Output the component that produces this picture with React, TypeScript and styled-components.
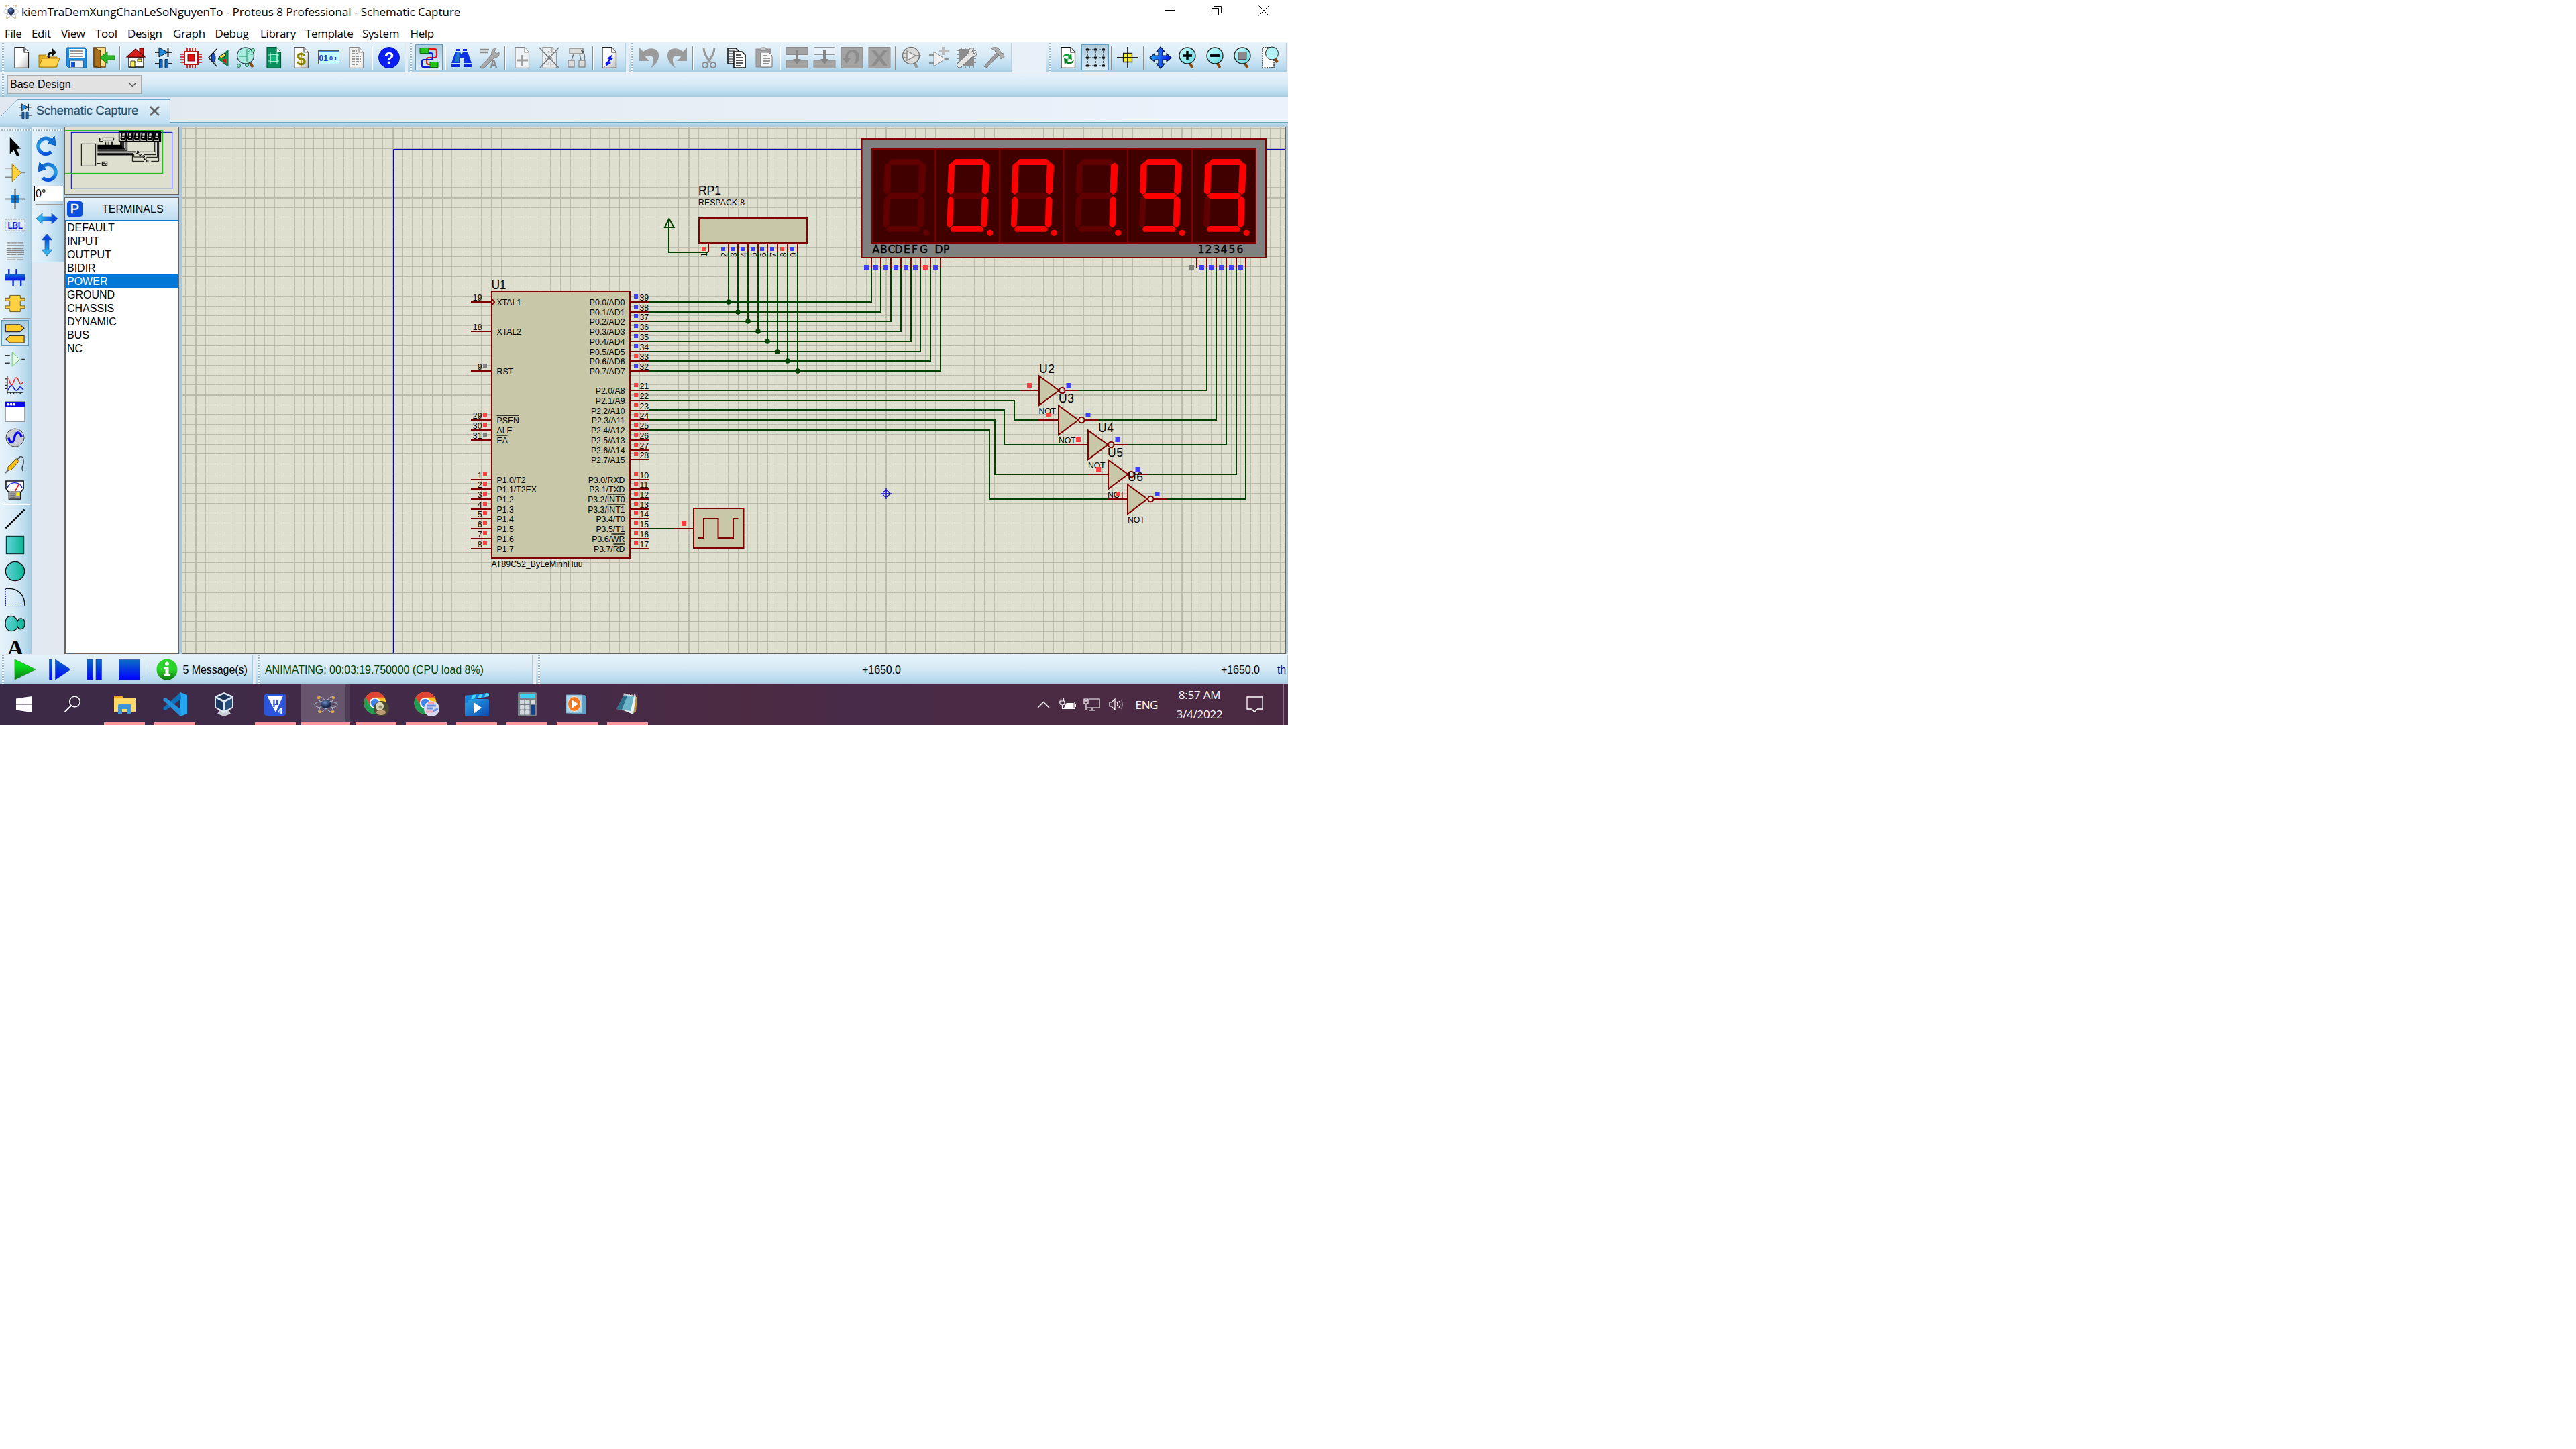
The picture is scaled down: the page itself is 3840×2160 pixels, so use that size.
import React from "react";
import styled, { createGlobalStyle, css } from "styled-components";

const Global = createGlobalStyle`
  html, body { margin: 0; padding: 0; background: #fff; }
  * { box-sizing: border-box; }
  svg { display: block; flex: none; }
`;

const ui = `"Open Sans", "Noto Sans", sans-serif`;
const sans = `"Liberation Sans", Arial, sans-serif`;
const barGradient = "#e6f2fa 0%, #d9ebf6 42%, #bfdef1 75%, #b5d7eb 88%, #a8c9dc 100%";

/* ---------- icons ---------- */

const page = (fill = "#fff", stroke = "#222") => (
  <>
    <path d="M6 .7h14l6.5 7.3v23.3H6z" fill={fill} stroke={stroke} strokeWidth="1.2" />
    <path d="M20 .7v7.3h6.5" fill="#fff" stroke={stroke} strokeWidth="1.2" />
  </>
);
const lens = (
  <>
    <path d="M18 23l4.5 8" stroke="#8a4a10" strokeWidth="4" />
    <ellipse cx="15" cy="13" rx="12" ry="12" fill="url(#lens)" stroke="#222" strokeWidth="1.3" />
  </>
);

const icons: Record<string, React.ReactNode> = {
  new: page("url(#paper)"),
  open: (
    <>
      <path d="M1 30V12h10l3 3h14v15z" fill="#e8b020" stroke="#a87808" />
      <path d="M1 30l5-13h26l-5 13z" fill="#ffd44c" stroke="#a87808" />
      <path d="M14 16c-1-7 2-9 7-9V2l6 6-6 6v-4c-4 0-5 2-4 6z" fill="#111" />
    </>
  ),
  save: (
    <>
      <path d="M2 1h26l3 3v27H4l-3-3V2z" fill="#1d8fe0" stroke="#1260a8" />
      <path d="M5 3h23v13H5z" fill="#fff" />
      <path d="M7 6h19M7 10h19M7 14h19" stroke="#333" strokeWidth="1.2" />
      <path d="M6 20h20v11H6z" fill="#e8eef4" stroke="#345" />
      <path d="M8 22h6v8H8z" fill="#1c55c4" />
    </>
  ),
  exit: (
    <>
      <path d="M1 1h17v29H1z" fill="#ffe08a" stroke="#6a4308" strokeWidth="1.5" />
      <path d="M1 1l10 5v25L1 29z" fill="#a8701c" stroke="#50320a" />
      <path d="M32 13H21V7L10 16l11 9v-6h11z" fill="#2fb52a" stroke="#1d8a1a" />
    </>
  ),
  home: (
    <>
      <path d="M21 2h6v10h-6z" fill="#d81818" stroke="#400" />
      <path d="M5 15h22v15H5z" fill="#fff" stroke="#111" strokeWidth="1.3" />
      <path d="M2 15L15 3l14 12z" fill="#dd1c1c" stroke="#500" strokeWidth="1.2" />
      <path d="M8 21h6v9H8zM18 18h6v4h-6z" fill="#fff04a" stroke="#222" />
    </>
  ),
  parts: (
    <>
      <path d="M3 8h26" stroke="#222" strokeWidth="1.8" />
      <path d="M9 1l13 7-13 7z" fill="#1f8be0" stroke="#111" />
      <path d="M22.5 1v14" stroke="#111" strokeWidth="2" />
      <path d="M3 25h8M21 25h8" stroke="#222" strokeWidth="1.8" />
      <path d="M9.500 18.500h4.500v13H9.500zM18 18.500h4.500v13H18z" fill="#1769b8" stroke="#0b2f58" />
    </>
  ),
  chip: (
    <>
      <path d="M10 1v30M14 1v30M18 1v30M22 1v30M0 11h32M0 15h32M0 19h32M0 23h32" stroke="#cf1010" strokeWidth="1.7" />
      <rect x="6" y="7" width="20" height="19" fill="#fff" stroke="#c01010" strokeWidth="2" />
      <rect x="11" y="11" width="10" height="10" fill="#e11414" stroke="#800" />
    </>
  ),
  eye3d: (
    <>
      <path d="M30 4v25L15 18z" fill="#129a52" stroke="#064" />
      <path d="M17 14l9-5v5l-7 3z" fill="#f5ec40" stroke="#111" />
      <path d="M20 19l7-1v7z" fill="#e01010" />
      <path d="M13 3L1 16l12 13" fill="none" stroke="#222" strokeWidth="1.6" />
      <ellipse cx="8" cy="16" rx="3" ry="7" fill="#1c50c8" stroke="#111" />
    </>
  ),
  board: (
    <>
      <path d="M20 22l6 8" stroke="#8a4a10" strokeWidth="4" />
      <ellipse cx="15" cy="13" rx="12.500" ry="12" fill="#a9ecdf" stroke="#345" strokeWidth="1.3" />
      <path d="M6 14h11V3M17 14v8M22 5c-6 3-5 6 4 6" stroke="#169060" fill="none" />
      <circle cx="5" cy="28" r="2.500" fill="#8fe0c8" stroke="#107048" />
      <circle cx="26" cy="5" r="2.500" fill="#8fe0c8" stroke="#107048" />
      <circle cx="17" cy="27" r="2.500" fill="#8fe0c8" stroke="#107048" />
    </>
  ),
  gerber: (
    <>
      {page("#0a8f60", "#065a3c")}
      <path d="M11 8v4h-3M21 8v4h3M11 25v-4h-3M21 25v-4h3" stroke="#b9f4da" fill="none" />
      <rect x="11" y="11" width="10" height="11" fill="#12b57c" stroke="#c4f6e0" strokeWidth="1.6" />
    </>
  ),
  bill: (
    <>
      {page("url(#paper)", "#555")}
      <text x="16" y="27" textAnchor="middle" fontFamily={sans} fontWeight="700" fontSize="25" fill="#8a8400">$</text>
    </>
  ),
  bits: (
    <>
      <rect x="0.500" y="5.500" width="31" height="20" fill="#c3fbff" stroke="#555" />
      <path d="M1 6h30v2H1z" fill="#3d7fd0" />
      <text x="1.500" y="20.500" fontFamily={sans} fontWeight="700" fontSize="12" fill="#0a36d8">01</text>
      <text x="17" y="20" fontFamily={sans} fontWeight="700" fontSize="9" fill="#0a36d8">0</text>
      <text x="24" y="19.500" fontFamily={sans} fontWeight="700" fontSize="8" fill="#0a36d8">1</text>
    </>
  ),
  report: (
    <>
      {page("#f2f2f0", "#888")}
      <path d="M9 6h8M9 10h9M9 14h14M9 18h14M9 22h14M9 26h10" stroke="#777" strokeWidth="1.400" strokeDasharray="5 1" />
    </>
  ),
  help: (
    <>
      <circle cx="16" cy="16" r="15.500" fill="#0a1df2" stroke="#0012b0" />
      <text x="16" y="24.500" textAnchor="middle" fontFamily={sans} fontWeight="700" fontSize="24" fill="#fff">?</text>
    </>
  ),
  wire: (
    <>
      <path d="M16 3h8q3 0 3 3v7q0 3-3 3h-9q-3 0-3 3v4q0 3 3 3h3" fill="none" stroke="#e81414" strokeWidth="2.200" />
      <path d="M15 9h3q3 0 3 3v4q0 3-3 3H8q-3 0-3 3v6q0 2 2 2h11" fill="none" stroke="#1018e0" strokeWidth="2.200" />
      <path d="M2 1.500h13v8H2zM17 22.500h12v8H17z" fill="#24c41e" stroke="#0b6a0a" />
    </>
  ),
  find: (
    <>
      <path d="M8 3h6v3H8zM18 3h6v3h-6z" fill="#0a28e0" />
      <path d="M7 7h7l1 3h2l1-3h7l6 17H19v-8h-6v8H1z" fill="#0d33e6" />
      <path d="M1 26h12v4H1zM19 26h12v4H19z" fill="#0a28e0" />
      <path d="M9 8h4l-1 15H5z" fill="#1d78c8" />
    </>
  ),
  props: (
    <>
      <path d="M2 4h14M2 8h12" stroke="#8c8c8c" strokeWidth="2.600" />
      <path d="M4 29L20 11c-1-6 2-9 7-9l-3 5 3 3 4-2c1 6-3 8-7 8L9 31c-3 2-7 1-5-2z" fill="#a8a8a8" stroke="#888" />
      <text x="17" y="31" fontFamily={sans} fontWeight="700" fontSize="16" fill="#8a8a8a">A</text>
    </>
  ),
  sheetAdd: (
    <>
      {page("#eef4f8", "#888")}
      <path d="M16 12v17M8 20h17" stroke="#a0a0a0" strokeWidth="3" />
    </>
  ),
  sheetDel: (
    <>
      {page("#e8eef2", "#999")}
      <path d="M13 8h7l-3-4zM10 18h12l-6-6zM11 26h4v-4M18 22v8M22 26h-4" fill="none" stroke="#aaa" />
      <path d="M1 1l29 30M30 1L2 31" stroke="#777" strokeWidth="1.600" />
    </>
  ),
  tree: (
    <>
      <path d="M5 2h20v8H5zM3 20h9v10H3zM19 20h9v10h-9z" fill="#dcdcdc" stroke="#8a8a8a" strokeWidth="1.300" />
      <path d="M11 10L8 20M20 10l2 10M23 7c5 2 5 8 4 13" stroke="#777" strokeWidth="1.500" fill="none" />
      <path d="M22 5l5 1-3 4z" fill="#555" />
    </>
  ),
  erc: (
    <>
      {page("url(#paper)")}
      <path d="M21 11l-8 6 3 2-6 6 2 1-3 4 10-6-3-2 6-5-3-1z" fill="#0a14f0" />
    </>
  ),
  undo: <path d="M1 1l6 6c9-8 24-6 23 7-.500 8-6 13-12 18 5-9 7-19-3-19-3 0-4 1-5 2l6 6H1z" fill="#9b9b9b" />,
  redo: <path d="M31 1l-6 6C16-1 1 1 2 14c.500 8 6 13 12 18-5-9-7-19 3-19 3 0 4 1 5 2l-6 6h15z" fill="#9b9b9b" />,
  cut: (
    <>
      <path d="M8 1c0 8 4 14 10 22M24 1c0 8-4 14-10 22" stroke="#999" strokeWidth="3" fill="none" />
      <ellipse cx="10" cy="27" rx="4" ry="4" fill="none" stroke="#8c8c8c" strokeWidth="2.200" />
      <ellipse cx="22" cy="27" rx="4" ry="4" fill="none" stroke="#8c8c8c" strokeWidth="2.200" />
    </>
  ),
  copy: (
    <>
      <path d="M3 2h12l4 4v19H3z" fill="#e8eef2" stroke="#111" strokeWidth="1.600" />
      <path d="M5 6h8M5 10h6M5 14h6M5 18h6M5 22h6" stroke="#222" />
      <path d="M12 7h12l5 5v19H12z" fill="#fff" stroke="#111" strokeWidth="1.600" />
      <path d="M15 12h7M15 16h11M15 20h11M15 24h11M15 28h8" stroke="#222" strokeWidth="1.300" />
    </>
  ),
  paste: (
    <>
      <path d="M4 3h22v27H4z" fill="#a2a2a2" stroke="#8a8a8a" />
      <path d="M10 5l2-4h6l2 4z" fill="#c8c8c8" stroke="#888" />
      <path d="M11 8h12l5 5v17H11z" fill="#f6f6f6" stroke="#777" />
      <path d="M14 13h7M14 17h11M14 21h11M14 25h9" stroke="#777" strokeWidth="1.300" />
    </>
  ),
  blockCopy: (
    <>
      <path d="M0 .500h32v11H0zM0 20h32v11.500H0z" fill="#a4a4a4" stroke="#8c8c8c" />
      <path d="M14 5h4v13h4l-6 8-6-8h4z" fill="#858585" />
    </>
  ),
  blockMove: (
    <>
      <path d="M.500 .500h31v11H.500z" fill="#e9f2f8" stroke="#999" />
      <path d="M0 20h32v11.500H0z" fill="#a4a4a4" stroke="#8c8c8c" />
      <path d="M14 5h4v13h4l-6 8-6-8h4z" fill="#858585" />
    </>
  ),
  blockRotate: (
    <>
      <path d="M0 .500h32v31H0z" fill="#a4a4a4" stroke="#8c8c8c" />
      <path d="M2 17h4C6 0 27 0 27 15c0 6-4 10-8 11 4-6 5-18-3-18-5 0-6 4-6 9h4l-6 8z" fill="#8c8c8c" />
    </>
  ),
  blockDelete: (
    <>
      <path d="M0 .500h32v31H0z" fill="#a4a4a4" stroke="#8c8c8c" />
      <path d="M4 5h6l6 8 6-8h6L19 16l9 12h-6l-6-8-6 8H4l9-12z" fill="#8c8c8c" />
    </>
  ),
  pick: (
    <>
      <path d="M20 23l4 8" stroke="#999" strokeWidth="4" />
      <ellipse cx="15" cy="13" rx="12.500" ry="12.500" fill="#dcdcdc" stroke="#777" strokeWidth="1.500" />
      <path d="M9 6l13 7-13 7zM5 10h4M5 16h4M22 13h8" fill="#eee" stroke="#888" strokeWidth="1.400" />
    </>
  ),
  make: (
    <>
      <path d="M22 0v12M16 6h14" stroke="#bdbdbd" strokeWidth="4" />
      <path d="M8 7l17 11L8 29z" fill="#f0f0f0" stroke="#888" />
      <path d="M1 12h7M1 24h7M24 18h6" stroke="#777" strokeWidth="1.600" />
    </>
  ),
  pack: (
    <>
      <path d="M2 5h28M2 11h28M2 17h28M2 23h28M8 1v30M14 1v30M20 1v30M26 1v30" stroke="#777" strokeWidth="1.300" />
      <path d="M4 3h23v25H4z" fill="#8e8e8e" />
      <path d="M2 25L18 10c0-6 3-9 8-8l-2 5 3 3 4-3c1 6-3 8-7 8L9 29c-5 5-9-1-7-4z" fill="#e4e4e4" stroke="#777" />
    </>
  ),
  hammer: (
    <>
      <path d="M19 9L1 29l4 2L23 12z" fill="#9c9c9c" stroke="#777" />
      <path d="M11 2c8-3 13-1 15 7l4 1 1 5-5 3-3-6-5-4-1-3z" fill="#b0b0b0" stroke="#777" />
    </>
  ),
  refresh: (
    <>
      {page("#fff", "#111")}
      <path d="M8 16c1-6 7-8 11-4l2-3 1 10-8-2 3-2c-3-3-6-2-9 1z" fill="#159a38" />
      <path d="M25 19c-1 6-7 9-12 5l-2 3-1-10 8 2-3 2c3 3 6 2 10-2z" fill="#0f7a2c" />
    </>
  ),
  grid: (
    <>
      <path d="M1 4h31M1 16h31M1 28h31M4 1v30M16 1v30M28 1v30" stroke="#222" strokeWidth="1.200" strokeDasharray="3 2" />
      <path d="M2 4h4M14 4h4M26 4h4M2 16h4M14 16h4M26 16h4M2 28h4M14 28h4M26 28h4" stroke="#111" strokeWidth="3" />
    </>
  ),
  origin: (
    <>
      <path d="M9.500 9.500h13v13h-13z" fill="#fff022" stroke="#222" strokeWidth="1.300" />
      <path d="M0 16h32M16 0v32" stroke="#222" strokeWidth="1.800" />
    </>
  ),
  pan: (
    <path d="M16 0l6 7h-3v6h6v-3l7 6-7 6v-3h-6v6h3l-6 7-6-7h3v-6H7v3l-7-6 7-6v3h6V7h-3z" fill="url(#blueMove)" stroke="#0a1440" strokeWidth="1.200" />
  ),
  zoomIn: (
    <>
      {lens}
      <path d="M8 13h14M15 6v14" stroke="#000" strokeWidth="3.400" />
    </>
  ),
  zoomOut: (
    <>
      {lens}
      <path d="M8 13h14" stroke="#000" strokeWidth="3.800" />
    </>
  ),
  zoomAll: (
    <>
      {lens}
      <path d="M9 7.500h12v11H9z" fill="#8a8a8a" stroke="#555" />
    </>
  ),
  zoomArea: (
    <>
      <path d="M4 1h17v30H4z" fill="#fff" stroke="#222" strokeWidth="1.300" strokeDasharray="2 1.500" />
      <path d="M22 16l4 7" stroke="#8a4a10" strokeWidth="4" />
      <circle cx="18" cy="9.500" r="9.500" fill="#b4f3f8" stroke="#222" />
    </>
  ),
  arrow: <path d="M8 1l17 18-7 .500 5 10-4 2-5-10-6 6z" fill="#000" />,
  component: (
    <>
      <path d="M1 9h11M1 23h11M24 16h8" stroke="#888" strokeWidth="1.600" />
      <path d="M11.500 2l14 14-14 14z" fill="#ffd23c" stroke="#8a7018" />
    </>
  ),
  junction: (
    <>
      <rect x="9.500" y="9.500" width="13" height="13" fill="#1280e0" />
      <path d="M1 16h30M16 1v30" stroke="#222" strokeWidth="1.800" />
    </>
  ),
  label: (
    <>
      <rect x="0.700" y="7" width="30.600" height="18" fill="#dceaf3" stroke="#777" strokeDasharray="3 1" />
      <text x="16" y="22" textAnchor="middle" fontFamily={ui} fontWeight="600" fontSize="15" textLength="24" fill="#1a1ac8">LBL</text>
    </>
  ),
  script: (
    <path d="M3 3h6M10 3h9M20 3h9M3 7h27M3 12h7M11 12h18M3 15h27M3 18h27M3 21h6M10 21h8M20 21h10M3 26h26M3 29h14M19 29h10" stroke="#8a8a8a" strokeWidth="1.300" />
  ),
  bus: (
    <>
      <path d="M6.500 3v10M18 3v10M13 20v9M25 20v9" stroke="#0a2ae0" strokeWidth="2.400" />
      <path d="M1 11h30v10H1z" fill="url(#blueBar)" />
    </>
  ),
  sub: (
    <path d="M8 3.500h16v4h7v4h-7v8h7v4h-7v5H8v-5H1v-4h7v-8H1v-4h7z" fill="#ffd040" stroke="#6a5818" />
  ),
  terminal: (
    <>
      <path d="M1.500 3h22l6.500 5.500-6.500 5.500h-22z" fill="#ffca2c" stroke="#333" strokeWidth="1.200" />
      <path d="M30 20H8l-6.500 5.500L8 31h22z" fill="#ffca2c" stroke="#333" strokeWidth="1.200" />
    </>
  ),
  pin: (
    <>
      <path d="M1 10h7M1 22h7M26 16h6" stroke="#333" strokeWidth="1.600" />
      <path d="M11.500 5l12 11-12 11z" fill="#e8f8ec" stroke="#58cc68" />
    </>
  ),
  graph: (
    <>
      <path d="M4 2v25h25M1 6h3M1 11h3M1 16h3M1 21h3M9 27v3M14 27v3M19 27v3M24 27v3M4 27v3" fill="none" stroke="#222" strokeWidth="1.400" />
      <path d="M6 4c3 14 5 14 8 6s5-8 8 0 4 3 7 0" fill="none" stroke="#f01818" strokeWidth="1.500" />
      <path d="M5 24c3-8 6-10 9-4s6 4 8 0 5 1 7 3" fill="none" stroke="#1010e0" strokeWidth="1.500" />
    </>
  ),
  popup: (
    <>
      <rect x="1" y="1" width="30" height="30" fill="#fff" stroke="#777" strokeWidth="1.400" />
      <path d="M.500 1h31v7.500H.500z" fill="#0a0af2" />
      <circle cx="5" cy="4.800" r="2" fill="#fff" /><circle cx="9.800" cy="4.800" r="2" fill="#fff" /><circle cx="14.600" cy="4.800" r="2" fill="#fff" />
    </>
  ),
  sine: (
    <>
      <circle cx="16" cy="16" r="14" fill="#c8ccd0" stroke="#444" />
      <path d="M6 16c2 9 7 10 9 0s8-10 11-1" fill="none" stroke="#0a0af2" strokeWidth="3.600" />
    </>
  ),
  probe: (
    <>
      <path d="M1 30l7-7" stroke="#777" strokeWidth="2.200" />
      <path d="M5 21L18 8l4 4L10 25l-5 1z" fill="#ffc420" stroke="#6a4a08" />
      <path d="M20 9c3-6 9-6 9 3 1 7-5 8-1 15" fill="none" stroke="#333" strokeWidth="1.300" />
    </>
  ),
  meter: (
    <>
      <path d="M2 2h27v12l-4 5H6l-4-5z" fill="#fff" stroke="#111" strokeWidth="1.600" />
      <path d="M4 13C7 2 24 2 27 13" fill="none" stroke="#1022e8" strokeWidth="1.500" />
      <path d="M16 18l6-11" stroke="#f01818" strokeWidth="1.800" />
      <path d="M6.500 19h18v11h-18z" fill="#9a9a9a" stroke="#111" strokeWidth="1.400" />
      <path d="M18 20h5v5h-5z" fill="#fff020" />
      <path d="M9 22h7M9 25h7M9 28h7" stroke="#222" />
    </>
  ),
  line: <path d="M1.500 30.500L30.500 1.500" stroke="#000" strokeWidth="2.400" />,
  box: <rect x="2.500" y="2.500" width="27" height="27" fill="url(#teal)" stroke="#123f3c" strokeWidth="1.300" />,
  circle: <circle cx="16" cy="16" r="14.600" fill="url(#teal)" stroke="#111" strokeWidth="1.300" />,
  arc: (
    <>
      <path d="M1.500 2.500C20 1 31 11 31 29.500" fill="none" stroke="#111" strokeWidth="1.400" />
      <path d="M1.500 3v26.500H31" fill="none" stroke="#1010e0" strokeDasharray="2 1.500" />
    </>
  ),
  path: (
    <path d="M20 12c3-6 11-5 11 4s-8 11-11 5C17 30 1 31 1 16S16 2 20 12z" fill="url(#teal)" stroke="#111" strokeWidth="1.300" />
  ),
  text: <text x="16" y="25.500" textAnchor="middle" fontFamily="'Liberation Serif', serif" fontWeight="700" fontSize="36">A</text>,
  cw: (
    <>
      <path d="M24 9.500A11.500 11.500 0 1 0 22.500 24" fill="none" stroke="url(#blueTurn)" strokeWidth="5.400" />
      <path d="M17 11L27 1l2.500 14z" fill="#0f72d4" stroke="#0a58b0" />
    </>
  ),
  ccw: (
    <>
      <path d="M8 9.500A11.500 11.500 0 1 1 9.500 24" fill="none" stroke="url(#blueTurn)" strokeWidth="5.400" />
      <path d="M15 11L5 1 2.500 15z" fill="#0f62d4" stroke="#0a58b0" />
    </>
  ),
  flipX: <path d="M0 16l9-8v5h14V8l9 8-9 8v-5H9v5z" fill="url(#flipx)" stroke="#1c5fa8" strokeWidth=".7" />,
  flipY: <path d="M16 0l8 9h-5v14h5l-8 9-8-9h5V9H8z" fill="url(#flipy)" stroke="#1c5fa8" strokeWidth=".7" />,
  play: <path d="M1 1l31 15L1 31z" fill="url(#green)" stroke="#2a6a2a" strokeWidth=".6" />,
  step: <path d="M.5 1h4v30h-4zM9.500 1L32 16 9.500 31z" fill="url(#bluePlay)" stroke="#203a8a" strokeWidth=".6" />,
  pause: <path d="M5 1h8.500v30H5zM18 1h8.500v30H18z" fill="url(#bluePlay)" stroke="#203a8a" strokeWidth=".6" />,
  stop: <path d="M.5 1.500h31v29.500H.5z" fill="url(#bluePlay)" stroke="#203a8a" strokeWidth=".6" />,
  info: (
    <>
      <circle cx="16" cy="16" r="15.500" fill="url(#info)" />
      <circle cx="16" cy="7.500" r="2.900" fill="#fff" />
      <path d="M11 12.500h7.500V23H21v2.500H11V23h2.500v-8H11z" fill="#fff" />
    </>
  ),
};

const Icon = ({ name, size = 32 }: { name: string; size?: number }) => (
  <svg width={size} height={size} viewBox="0 0 32 32" overflow="visible">{icons[name]}</svg>
);

/* ---------- window chrome ---------- */

const Window = styled.div`
  width: 1920px; height: 1080px; overflow: hidden;
  display: flex; flex-direction: column;
  background: linear-gradient(90deg, #e1e8f0, #eaf3fb);
  font-family: ${sans}; font-size: 16px; color: #000;
`;
const TitleBar = styled.div`
  height: 36px; padding: 0 0 1px 5px; background: #fff;
  display: flex; align-items: center; font-family: ${ui};
`;
const Title = styled.span`
  flex: 1; padding-left: 4px; font-size: 17px; letter-spacing: -0.03px; white-space: nowrap; line-height: 34px;
`;
const Controls = styled.div`display: flex; gap: 54px; padding-right: 28px; margin-top: -3px;`;
const MenuBar = styled.div`
  height: 26px; padding: 1px 0 0 7px; background: #fff; display: flex; font-family: ${ui};
`;
const MenuItem = styled.span<{ $w: number }>`
  width: ${(p) => p.$w}px; font-size: 17px; line-height: 25px; letter-spacing: -0.38px; white-space: nowrap;
`;
const ToolRow = styled.div`
  height: 46px; padding-top: 1px; display: flex; border-top: 1px solid #f0f0f0;
`;
const ToolGroup = styled.div<{ $w: number; $gap: number }>`
  width: ${(p) => p.$w}px; margin-right: ${(p) => p.$gap}px; height: 44px; padding-left: 3px;
  display: flex; align-items: center;
  border-right: 1px solid #b3cfe2;
  background: linear-gradient(${barGradient});
`;
const Grip = styled.span<{ $pad?: number }>`
  align-self: stretch; width: 3px; margin-right: ${(p) => p.$pad ?? 5}px; flex: none;
  background: repeating-linear-gradient(#9db3c3 0 2px, #f5fafd 2px 4px);
`;
const ToolButton = styled.span<{ $on?: boolean }>`
  width: 41px; height: 39px; flex: none; margin-top: -1px;
  display: flex; align-items: center; justify-content: center;
  ${(p) => p.$on && css`border: 1px solid #5f9cc0; background: linear-gradient(#a9cade, #d9edf9);`}
`;
const VRule = styled.span`
  width: 2px; height: 35px; margin: 0 3px 0 2.500px; flex: none; background: #8f8f8f; border-right: 1px solid #fff;
`;
const DesignRow = styled.div`
  height: 36px; border-top: 2px solid #e9eff5; padding-left: 3px;
  display: flex; align-items: center;
  background: linear-gradient(${barGradient});
`;
const Combo = styled.div`
  width: 200px; height: 28px; margin-top: -2px; padding: 0 6px 0 3px; background: #e2e2e2; border: 1px solid #acacac;
  display: flex; align-items: center; justify-content: space-between;
`;
const TabRow = styled.div`
  height: 39px; display: flex; align-items: flex-end; border-bottom: 1px solid #6fa0c0;
`;
const Tab = styled.div`
  position: relative; width: 254px; height: 35px; margin-bottom: -1px; padding-left: 26px;
  display: flex; align-items: center; color: #27506f; font-size: 18px;
  -webkit-text-stroke: 0.35px #27506f;
`;
const TabShape = styled.svg`position: absolute; left: 0; top: 0; z-index: 0;`;
const TabLabel = styled.span`position: relative; margin: 0 17px 0 5px; letter-spacing: -0.05px; white-space: nowrap;`;
const TabIcon = styled.span`position: relative;`;
const Band = styled.div`height: 6px; background: linear-gradient(#c0dff2, #a9cbe0);`;

const Main = styled.div`height: 786px; display: flex;`;
const SideBar = styled.div<{ $w: number; $h: number }>`
  width: ${(p) => p.$w}px; height: ${(p) => p.$h}px; overflow: hidden; padding: 3px 0 0 2px;
  display: flex; flex-direction: column; align-items: flex-start;
  background: linear-gradient(90deg, ${barGradient});
  border-bottom: ${(p) => (p.$h < 700 ? "1px solid #a9cbe0" : "none")};
`;
const HGrip = styled.span`
  height: 3px; width: 44px; margin-bottom: 3.500px; flex: none;
  background: repeating-linear-gradient(90deg, #9db3c3 0 2px, #f5fafd 2px 4px);
`;
const HRule = styled.span<{ $m: string }>`
  width: 41px; height: 2px; margin: ${(p) => p.$m}; flex: none; background: #9b9b9b; border-bottom: 1px solid #fff;
`;
const SideButton = styled(ToolButton)`margin-top: 0;`;
const Angle = styled.div`
  width: 43px; height: 23px; margin: 0 0 3px 2px; padding-left: 1px; line-height: 22px; flex: none; background: #fff;
  border-top: 1px solid #000; border-left: 1px solid #000;
`;
const Selector = styled.div`
  width: 171px; height: 786px; display: flex; flex-direction: column; gap: 4px; background: #b5d3e6;
`;
const Overview = styled.div`height: 101px; border: 1px solid #666; background: #dfdfcf; overflow: hidden;`;
const Panel = styled.div`flex: 1; border: 1px solid #666; display: flex; flex-direction: column;`;
const PanelHead = styled.div`
  height: 33px; padding-left: 3px; display: flex; align-items: center; background: linear-gradient(#e6f2fa, #bddcf0);
`;
const PBadge = styled.span`
  width: 23px; height: 23px; margin-right: 29px; border-radius: 4px; background: #0a50dc; color: #fff;
  font-size: 20px; line-height: 23px; text-align: center; -webkit-text-stroke: 0.5px #fff;
`;
const List = styled.div`flex: 1; background: #fff; border: 1px solid #0f78c8;`;
const Row = styled.div<{ $on: boolean }>`
  height: 20px; padding-left: 2px; line-height: 21px;
  ${(p) => p.$on && css`background: #0078d7; color: #fff;`}
`;
const CanvasFrame = styled.div`
  width: 1653px; height: 786px; padding-left: 4px; background: #a9c8dc;
`;
const Canvas = styled.div`width: 1646px; height: 786px; border: 1px solid #666; background: #dfdfcf;`;

const StatusBar = styled.div`height: 45px; padding-top: 1px; display: flex;`;
const StatusGroup = styled.div<{ $w: number; $gap?: number }>`
  width: ${(p) => p.$w}px; margin-right: ${(p) => p.$gap ?? 0}px; height: 44px; padding-left: 3px; flex: none;
  display: flex; align-items: center; overflow: hidden; white-space: nowrap;
  background: linear-gradient(${barGradient}); border-right: 1px solid #a9cbe0;
`;
const Play = styled.span<{ $ml: number }>`margin-left: ${(p) => p.$ml}px;`;
const Msg = styled.span<{ $ml: number; $c?: string }>`
  margin-left: ${(p) => p.$ml}px; padding-top: 2px; color: ${(p) => p.$c ?? "#000"}; letter-spacing: -0.05px;
`;

/* ---------- taskbar ---------- */

const TaskBar = styled.div`
  height: 60px; display: flex; padding-left: 0;
  background: linear-gradient(90deg, #3b2a47 0%, #402a48 20%, #452b48 45%, #4b2a42 58%, #472b48 66%, #4b2b43 85%, #4a2a42 100%);
  color: #fff; font-family: ${ui};
`;
const Slot = styled.span<{ $w: number; $run?: boolean; $active?: boolean }>`
  position: relative; width: ${(p) => p.$w}px; flex: none; display: flex; align-items: center; justify-content: center;
  ${(p) => p.$active && css`background: linear-gradient(90deg, transparent 1px, #67556d 1px 67px, #4f3c55 67px 74px, transparent 74px);`}
  ${(p) => p.$run && css`
    &::after {
      content: ""; position: absolute; bottom: 0; height: 3px; background: #ff979d;
      left: ${p.$active ? 1 : 7}px; width: ${p.$active ? 73 : 61}px;
    }`}
`;
const Tray = styled.div`margin-left: auto; display: flex; align-items: center; font-size: 17px;`;
const TrayItem = styled.span<{ $mr: number }>`margin-right: ${(p) => p.$mr}px; letter-spacing: -0.4px;`;
const Clock = styled.span`
  width: 80px; margin-right: 30px; padding-bottom: 1px; text-align: center; line-height: 29px; letter-spacing: -0.2px; font-size: 17px;
`;
const ShowDesktop = styled.span`width: 8px; height: 60px; border-left: 2px solid #8a7088;`;

const Atom = ({ w, h, c = "#c8a060" }: { w: number; h: number; c?: string }) => (
  <svg width={w} height={h} viewBox="0 0 36 36" preserveAspectRatio="none">
    <ellipse cx="18" cy="18" rx="17" ry="7" fill="none" stroke="#a8b4c8" strokeWidth="1.200" />
    <ellipse cx="18" cy="18" rx="19" ry="4.500" fill="none" stroke="#a8b4c8" strokeWidth="1.200" transform="rotate(56 18 18)" />
    <ellipse cx="18" cy="18" rx="19" ry="4.500" fill="none" stroke="#a8b4c8" strokeWidth="1.200" transform="rotate(-56 18 18)" />
    <circle cx="18" cy="17" r="8" fill="url(#orb)" />
    {[[7, 4], [29, 4], [9, 32], [28, 32]].map(([x, y]) => <circle key={`${x}${y}`} cx={x} cy={y} r="2.500" fill={c} />)}
  </svg>
);
const Chrome = ({ kind }: { kind: "a" | "b" }) => (
  <svg width="40" height="40" viewBox="0 0 40 40">
    <circle cx="18" cy="18" r="16.500" fill="#fbc116" />
    <path d="M3.700 9.800A16.500 16.500 0 0 1 32.300 9.800H18A8.200 8.200 0 0 0 10.900 22.100z" fill="#e04434" />
    <path d="M3.700 9.800A16.500 16.500 0 0 0 18 34.500l7-12.300A8.200 8.200 0 0 1 10.900 22z" fill="#1f9d55" />
    <circle cx="18" cy="18" r="8" fill="#fff" /><circle cx="18" cy="18" r="6.300" fill="#3f83ee" />
    <circle cx="27.500" cy="26.500" r="11.500" fill={kind === "a" ? "#4a4a35" : "#d8dcf0"} />
    {kind === "a" ? (
      <>
        <ellipse cx="25" cy="23" rx="6" ry="6.500" fill="#d8d2b4" />
        <ellipse cx="27" cy="32" rx="7" ry="4" fill="#b99a70" />
        <circle cx="26" cy="24" r="2.500" fill="#8d8a68" />
      </>
    ) : (
      <>
        <path d="M20 22h14M21 26h9M29 30l8-3" stroke="#6c8ede" strokeWidth="3" />
        <path d="M19 31h10M22 18h9" stroke="#f2a0b4" strokeWidth="3" />
      </>
    )}
  </svg>
);
const taskIcons: Record<string, React.ReactNode> = {
  start: (
    <svg width="24" height="24" viewBox="0 0 24 24"><path d="M0 3.500l10-1.600V11.400H0zM11 1.700L24 0v11.400H11zM0 12.500h10V22L0 20.500zM11 12.500h13V24l-13-1.800z" fill="#fff" /></svg>
  ),
  search: (
    <svg width="30" height="26" viewBox="0 0 30 26"><circle cx="16.500" cy="9" r="7.800" fill="none" stroke="#fff" strokeWidth="1.500" /><path d="M11 15L1.500 24.500" stroke="#fff" strokeWidth="1.800" /></svg>
  ),
  explorer: (
    <svg width="32" height="28" viewBox="0 0 32 28">
      <path d="M0 1h12l2 3h17v22H0z" fill="#e8a913" /><path d="M0 5h32v21H0z" fill="#ffd865" />
      <path d="M6 28V16q0-2 2-2h16q2 0 2 2v12h-6v-7h-8v7z" fill="#3d96da" />
    </svg>
  ),
  code: (
    <svg width="36" height="36" viewBox="0 0 36 36">
      <path d="M26 0l10 4v28l-10 4-1-10V10z" fill="#25a6f2" />
      <path d="M26 0L4 20l-4 3 1 3 3 1L27 10z" fill="#0f6fb8" />
      <path d="M26 36L4 15l-4-3 1-3 3-1L27 26z" fill="#2290dd" />
    </svg>
  ),
  vbox: (
    <svg width="34" height="36" viewBox="0 0 34 36">
      <path d="M9 26h12l4 6-10 4-10-4z" fill="#c8ccd4" />
      <path d="M15 0l14 6v17l-14 8L1 23V6z" fill="#dfe8f2" />
      <path d="M15 2.500L25 7l-10 5L5 7z" fill="#1a3557" /><path d="M3 9l10.500 5.500v13L3 22z" fill="#1c3a60" /><path d="M27 9l-10.500 5.500v13L27 22z" fill="#27507c" />
    </svg>
  ),
  keil: (
    <svg width="34" height="33" viewBox="0 0 34 33">
      <rect width="32" height="33" rx="4" fill="#2a55dc" /><path d="M4 3h24L17 28z" fill="#fff" />
      <text x="16.500" y="17" textAnchor="middle" fontFamily={sans} fontWeight="700" fontSize="15" fill="#2348c8">µ</text>
      <text x="20" y="30" fontFamily={sans} fontWeight="700" fontSize="13" fill="#fff">4</text>
    </svg>
  ),
  proteus: <Atom w={36} h={27} c="#e8a830" />,
  chromeA: <Chrome kind="a" />,
  chromeB: <Chrome kind="b" />,
  movies: (
    <svg width="36" height="36" viewBox="0 0 36 36">
      <rect y="10" width="36" height="26" rx="2" fill="url(#movie)" />
      <path d="M0 5L34 1q2 0 2 2v3L5 12v4H0z" fill="#1585dc" /><path d="M12 4l5-.600-3 6-5 1zM22 2.700l5-.600-3 6-5 .800zM31 1.300l5 .500v4l-7 1.500z" fill="#4cd8fa" />
      <path d="M13 15l12 8-12 9z" fill="#fff" />
    </svg>
  ),
  calc: (
    <svg width="28" height="36" viewBox="0 0 28 36">
      <rect width="28" height="36" rx="2" fill="#7b7f88" /><rect x="3" y="3" width="22" height="6" fill="#3fd0f5" />
      {[3, 11, 19].map((x) => [11, 19, 27].map((y) => <rect key={`${x}-${y}`} x={x} y={y} width="6.500" height="6.500" rx="1" fill={x === 19 && y > 11 ? "#12418a" : "#d3d7de"} />))}
      <rect x="19" y="19" width="6.500" height="14.500" fill="#12418a" />
    </svg>
  ),
  wmp: (
    <svg width="36" height="32" viewBox="0 0 36 32">
      <path d="M4 3l24-1 3 2v26l-5 1L2 29z" fill="#5e9fc4" /><path d="M1 2h24v27H1z" fill="#a8d4ea" stroke="#6fa8c8" />
      <ellipse cx="13" cy="15.500" rx="9.500" ry="11" fill="#f4791e" stroke="#fff0d8" /><path d="M9 9l10 6.500L9 22z" fill="#fff" />
    </svg>
  ),
  notepad: (
    <svg width="36" height="34" viewBox="0 0 36 34">
      <path d="M28 6h4l-2 22-4 2z" fill="#b8923a" /><path d="M12 2l18 2-4 28-22-9z" fill="#e8f2f2" />
      <path d="M12 3l15 2-5 22L1 24z" fill="#6cb4c8" /><path d="M12 3l5 1-8 21-8-1z" fill="#2f6f8a" />
      <path d="M12 2l18 2" stroke="#ccc" strokeWidth="3" strokeDasharray="1.500 1" />
    </svg>
  ),
};

/* ---------- schematic ---------- */

const U = 14.7;
const row = (k: number) => Math.round(450 + k * U);
const RED = "#ff4040", BLUE = "#4040ff", GRAY = "#808080";
const WIRE = "#004000", PIN = "#800000", BODY = "#c8c8a8";

const Sheet = styled.svg`
  font-family: ${sans}; font-size: 12.3px;
  .pin { stroke: ${PIN}; stroke-width: 2; fill: none; }
  .wire { stroke: ${WIRE}; stroke-width: 2; fill: none; }
  .body { fill: ${BODY}; }
  .bezel { fill: #808080; }
  .glass { fill: #400000; }
  .ref { font-size: 17.500px; }
`;

const leftPins: [number, string, string, string?, number?][] = [
  [0, "19", "XTAL1"], [3, "18", "XTAL2"], [7, "9", "RST", GRAY],
  [12, "29", "PSEN", RED, 33], [13, "30", "ALE", RED], [14, "31", "EA", GRAY, 16],
  [18, "1", "P1.0/T2", RED], [19, "2", "P1.1/T2EX", RED],
  ...[2, 3, 4, 5, 6, 7].map((n) => [18 + n, String(n + 1), `P1.${n}`, RED] as [number, string, string, string]),
];
const rightPins: [number, string, string, string, number?][] = [
  ...[0, 1, 2, 3, 4, 5, 6, 7].map((n) => [n, String(39 - n), `P0.${n}/AD${n}`, n === 6 ? RED : BLUE] as [number, string, string, string]),
  ...[0, 1, 2, 3, 4, 5, 6, 7].map((n) => [9 + n, String(21 + n), `P2.${n}/A${8 + n}`, RED] as [number, string, string, string]),
  [18, "10", "P3.0/RXD", RED], [19, "11", "P3.1/TXD", RED], [20, "12", "P3.2/INT0", RED, 26], [21, "13", "P3.3/INT1", RED, 26],
  [22, "14", "P3.4/T0", RED], [23, "15", "P3.5/T1", RED], [24, "16", "P3.6/WR", RED, 20], [25, "17", "P3.7/RD", RED, 17],
];

const Mcu = () => (
  <g>
    <rect x="733" y="435" width="206" height="397" className="pin body" />
    <text x="732.500" y="431" className="ref" textLength="22">U1</text>
    <text x="732.500" y="845" textLength="136">AT89C52_ByLeMinhHuu</text>
    <path d="M733 445l4 5-4 5" className="pin" strokeWidth="1.500" />
    {leftPins.map(([k, num, name, color, over]) => (
      <g key={num}>
        <path d={`M702 ${row(k)}H733`} className="pin" />
        <text x="718.500" y={row(k) - 2} textAnchor="end">{num}</text>
        {color && <rect x="720" y={row(k) - 11} width="6" height="6" fill={color} />}
        <text x="740.500" y={row(k) + 5}>{name}</text>
        {over && <path d={`M740.500 ${row(k) - 7}h${over}`} stroke="#000" strokeWidth="1.300" />}
      </g>
    ))}
    {rightPins.map(([k, num, name, color, over]) => (
      <g key={num}>
        <path d={`M939 ${row(k)}H968`} className="pin" />
        <text x="953.500" y={row(k) - 2}>{num}</text>
        <rect x="945" y={row(k) - 11} width="6" height="6" fill={color} />
        <text x="931.500" y={row(k) + 5} textAnchor="end">{name}</text>
        {over && <path d={`M931.500 ${row(k) - 7}h${-over}`} stroke="#000" strokeWidth="1.300" />}
      </g>
    ))}
  </g>
);

const busX = [1299, 1313, 1328, 1343, 1358, 1372, 1387, 1402];
const packX = [1086, 1100, 1115, 1130, 1144, 1159, 1174, 1189];
const busColor = (i: number) => (i === 6 ? RED : BLUE);

const ResPack = () => (
  <g>
    {packX.map((x, i) => (
      <g key={x}>
        <path d={`M968 ${row(i)}H${busX[i]}V399M${x} 376V${row(i)}`} className="wire" />
        <circle cx={x} cy={row(i)} r="3.800" fill={WIRE} />
        <path d={`M${x} 362v14`} className="pin" />
        <rect x={x - 11} y="368" width="6" height="6" fill={busColor(i)} />
        <text transform={`translate(${x - 2} 383) rotate(-90)`}>{i + 2}</text>
      </g>
    ))}
    <path d="M997 326v50h59M991 339l6.300-13 7.300 13z" className="wire" />
    <path d="M1056 362v14" className="pin" />
    <rect x="1046" y="368" width="6" height="6" fill={RED} />
    <text transform="translate(1053.500 383) rotate(-90)">1</text>
    <rect x="1042" y="325" width="161" height="37" className="pin body" />
    <text x="1041" y="290" className="ref" textLength="34">RP1</text>
    <text x="1041" y="306" textLength="69">RESPACK-8</text>
  </g>
);

const segments: Record<string, string> = {
  a: "24.400,242 29.900,237 70.300,237 75.300,242 72,246 28.200,246",
  f: "24,242.300 28.600,245.500 27.400,286 22.700,290 17.700,286 19.400,246",
  b: "76.200,242.300 81.200,246.500 79,286 74,290 69,286 70.700,246",
  g: "22.700,291.300 27.400,287 69,287 73.200,291.300 69,296 25.700,296",
  e: "22.300,292.300 27.400,296.700 25.700,335.500 21,340 16.800,336 18.500,296.700",
  c: "74,292.300 78.700,296.700 77.400,335.500 72.800,339.800 67.800,336 69,296",
  d: "21.500,341.300 25.700,337 67.800,337 72.400,341.300 69.900,345.700 24,345.700",
};
const digits = ["", "abcdef.", "abcdef.", "bc.", "abcdfg.", "abcdfg."];
const cells = [1299.5, 1394.5, 1490, 1585.5, 1681, 1777];

const Display = () => (
  <g>
    <rect x="1284.500" y="207" width="602.500" height="177" className="pin bezel" />
    <rect x="1300" y="222" width="572" height="140" className="pin glass" />
    {cells.map((x, i) => (
      <g key={x}>
        {i > 0 && <path d={`M${x} 222v140`} className="pin" />}
        <g transform={`translate(${x} 0)`}>
          {Object.entries(segments).map(([s, pts]) => (
            <polygon key={s} points={pts} fill={digits[i].includes(s) ? "#f00" : "#600000"} />
          ))}
          <circle cx="81.200" cy="347.300" r="4.600" fill={digits[i].includes(".") ? "#f00" : "#600000"} />
        </g>
      </g>
    ))}
    <g fontFamily='"DejaVu Sans", sans-serif' fontSize="15.500" stroke="#000" strokeWidth=".5">
      <text x="1300.500 1312 1323.500 1333.500 1347 1359 1371 1384 1393.500 1406" y="377.300">ABCDEFG DP</text>
      <text x="1785.500 1796.500 1808.500 1819.500 1831.500 1843.500" y="377.300">123456</text>
    </g>
    {busX.map((x, i) => (
      <g key={x}>
        <path d={`M${x} 385v14`} className="pin" />
        <rect x={x - 11} y="395" width="7" height="7" fill={busColor(i)} />
      </g>
    ))}
    {[1784, 1799, 1813, 1828, 1843, 1857].map((x, i) => (
      <g key={x}>
        <path d={`M${x} 385v14`} className="pin" />
        <rect x={x - 11} y="395" width="7" height="7" fill={i ? BLUE : GRAY} />
      </g>
    ))}
  </g>
);

type Gate = { n: string; y: number; x: number; start: string; out: number; ref: [number, number]; name: [number, number] };
const gates: Gate[] = [
  { n: "U2", y: 582, x: 1549, start: "M968 582", out: 1799, ref: [1549, 556], name: [1548.5, 617] },
  { n: "U3", y: 626, x: 1578, start: "M968 597H1512V626", out: 1813, ref: [1578, 600], name: [1578, 661] },
  { n: "U4", y: 663, x: 1622, start: "M968 611H1497V663", out: 1828, ref: [1637, 644], name: [1622, 698] },
  { n: "U5", y: 707, x: 1652, start: "M968 626H1483V707", out: 1843, ref: [1651, 681], name: [1651, 742] },
  { n: "U6", y: 744, x: 1681, start: "M968 641H1475V744", out: 1857, ref: [1681, 717], name: [1681, 779] },
];
const NotGate = ({ g }: { g: Gate }) => (
  <g>
    <path d={`${g.start}H${g.x - 30}M${g.x + 58} ${g.y}H${g.out}V399`} className="wire" />
    <path d={`M${g.x - 30} ${g.y}h30M${g.x + 39} ${g.y}h20`} className="pin" />
    <path d={`M${g.x} ${g.y - 21.500}v43.500l29.500-22z`} className="pin body" />
    <circle cx={g.x + 34.300} cy={g.y} r="4.200" className="pin" />
    <text x={g.name[0]} y={g.name[1]} textLength="25.500">NOT</text>
    <text x={g.ref[0]} y={g.ref[1]} className="ref" textLength="23">{g.n}</text>
    <rect x={g.x - 18} y={g.y - 11} width="7" height="7" fill={RED} />
    <rect x={g.x + 40.500} y={g.y - 11} width="7" height="7" fill={BLUE} />
  </g>
);

const minor = [1, 2, 3, 4, 5, 6, 7, 8, 9].map((i) => Math.round(i * U));
const Schematic = () => (
  <Sheet width="1644" height="784" viewBox="272 190 1644 784">
    <defs>
      <pattern id="grid" x="1026" y="294" width="147" height="147" patternUnits="userSpaceOnUse">
        {minor.map((m) => <path key={m} d={`M${m} 0h1v147h-1zM0 ${m}h147v1H0z`} fill="#bbbbac" />)}
        <path d="M0 0h2v147H0zM0 0h147v2H0z" fill="#bbbbac" />
      </pattern>
      <linearGradient id="paper" x2="1" y2="1"><stop offset=".5" stopColor="#fff" /><stop offset="1" stopColor="#bbb" /></linearGradient>
      <linearGradient id="lens" x2="1" y2="1"><stop stopColor="#c8fafa" /><stop offset="1" stopColor="#62dce4" /></linearGradient>
      <linearGradient id="teal"><stop stopColor="#62d4d8" /><stop offset="1" stopColor="#0ab494" /></linearGradient>
      <linearGradient id="blueMove"><stop stopColor="#28aaf0" /><stop offset="1" stopColor="#0a14f0" /></linearGradient>
      <linearGradient id="blueTurn" x2="0" y2="1"><stop stopColor="#1676d8" /><stop offset=".5" stopColor="#2ba4e4" /><stop offset="1" stopColor="#0a50d8" /></linearGradient>
      <linearGradient id="flipx"><stop offset=".2" stopColor="#2fb0e8" /><stop offset=".8" stopColor="#0a48dc" /></linearGradient>
      <linearGradient id="flipy" x2="0" y2="1"><stop offset=".2" stopColor="#0a48dc" /><stop offset=".8" stopColor="#2fb0e8" /></linearGradient>
      <linearGradient id="blueBar" x2="0" y2="1"><stop stopColor="#0c6cc8" /><stop offset="1" stopColor="#0a10f0" /></linearGradient>
      <linearGradient id="bluePlay" x2="0" y2="1"><stop stopColor="#0a6ec4" /><stop offset="1" stopColor="#0000ff" /></linearGradient>
      <linearGradient id="green" x2="0" y2="1"><stop offset=".3" stopColor="#08e018" /><stop offset="1" stopColor="#0a7a18" /></linearGradient>
      <linearGradient id="info" x2="0" y2="1"><stop offset=".5" stopColor="#2bd42b" /><stop offset="1" stopColor="#0a7a0a" /></linearGradient>
      <linearGradient id="movie" x2="1" y2="1"><stop stopColor="#2ea8e8" /><stop offset="1" stopColor="#0a48b4" /></linearGradient>
      <radialGradient id="orb" cx=".4" cy=".3"><stop stopColor="#6f8fc8" /><stop offset="1" stopColor="#1c2c50" /></radialGradient>
    </defs>
    <rect x="272" y="190" width="1643" height="783" fill="url(#grid)" />
    <path d="M586.500 974V222.500H1916" fill="none" stroke="#0000b0" />
    <g stroke="#1414d0" fill="none" strokeWidth="1.400">
      <circle cx="1321" cy="736" r="4.500" /><path d="M1313 736h16M1321 728v16" />
    </g>
    <Mcu />
    <ResPack />
    {gates.map((g) => <NotGate key={g.n} g={g} />)}
    <Display />
    <path d="M968 788h37" className="wire" />
    <path d="M1004 788h30" className="pin" />
    <rect x="1016" y="777" width="7" height="7" fill={RED} />
    <rect x="1034" y="758" width="74.500" height="59" className="pin body" />
    <path d="M1041 802h8v-29h21.500v29H1093v-29h7.500" className="pin" />
  </Sheet>
);

const Thumb = () => (
  <svg width="169" height="99" viewBox="291 30 507 297" fill="none" stroke="#000" strokeWidth="3">
    <rect x="319" y="52" width="451" height="252" stroke="#0000c0" />
    <rect x="285" y="44" width="443" height="191" stroke="#00b800" />
    <rect x="364" y="103" width="64" height="99" />
    <rect x="460" y="76" width="49" height="10" />
    <path d="M446 76v16h16M441 82h8" />
    <path d="M473 92v16M479 92v16M486 92v20M499 92v32M503 92v32" />
    <rect x="533" y="49" width="185" height="43" strokeWidth="5" />
    {[541, 572, 601, 631, 661, 690].map((x) => <path key={x} d={`M${x} 81l4-26h16l-3 26h-17M${x + 3} 68h16M${x + 24} 52v38`} strokeWidth="6" />)}
    <path d="M436 110h104V92M436 116h110V92M436 121h116V92M436 126h124V92M436 132h132V92M436 139h172M436 147h160M436 152h158" strokeWidth="5" />
    <path d="M624 139h68V92M642 152h55V92M655 163h49V92M676 181h34V92M599 147v15h38M592 152v29h50M606 146h12v6" />
    <path d="M614 135v10l10-5zM624 147v10l8-5zM639 155v10l9-5zM646 165v10l9-5zM656 175v10l8-5z" />
    <path d="M435 191h14" /><rect x="457" y="184" width="22" height="15" /><path d="M462 195v-6h6v6h6v-6" />
  </svg>
);

/* ---------- data ---------- */

const menus: [string, number][] = [["File", 40], ["Edit", 44], ["View", 51], ["Tool", 48], ["Design", 68], ["Graph", 62.5], ["Debug", 67.5], ["Library", 67], ["Template", 85], ["System", 71.5], ["Help", 50]];
const groups: { w: number; gap: number; pad?: number; items: string[] }[] = [
  { w: 604, gap: 4, items: ["new", "open", "save", "exit", "|", "home", "parts", "chip", "eye3d", "board", "gerber", "bill", "bits", "report", "|", "help"] },
  { w: 325, gap: 4, items: ["wire*", "|", "find", "props", "|", "sheetAdd", "sheetDel", "tree", "|", "erc"] },
  { w: 571, gap: 52, pad: 4, items: ["undo", "redo", "|", "cut", "copy", "paste", "|", "blockCopy", "blockMove", "blockRotate", "blockDelete", "|", "pick", "make", "pack", "hammer"] },
  { w: 358, gap: 0, items: ["refresh", "grid*", "|", "origin", "|", "pan", "zoomIn", "zoomOut", "zoomAll", "zoomArea"] },
];
const side = ["arrow", "component", "junction", "label", "script", "bus", "sub", "|", "terminal*", "pin", "graph", "popup", "sine", "probe", "meter", "|", "line", "box", "circle", "arc", "path", "text"];
const terminals = ["DEFAULT", "INPUT", "OUTPUT", "BIDIR", "POWER", "GROUND", "CHASSIS", "DYNAMIC", "BUS", "NC"];
const tasks: [string, number, boolean][] = [
  ["start", 72, false], ["search", 76, false], ["explorer", 75, true], ["code", 75, true], ["vbox", 75, false], ["keil", 75, true],
  ["proteus", 75, true], ["chromeA", 75, true], ["chromeB", 75, true], ["movies", 75, true], ["calc", 75, true], ["wmp", 75, true], ["notepad", 75, true],
];

export default function App() {
  return (
    <Window>
      <Global />
      <TitleBar>
        <Atom w={23} h={23} c="#e0c090" />
        <Title>kiemTraDemXungChanLeSoNguyenTo - Proteus 8 Professional - Schematic Capture</Title>
        <Controls>
          <svg width="16" height="16"><path d="M0 7.500h15" stroke="#000" /></svg>
          <svg width="16" height="16" fill="none" stroke="#000"><path d="M.500 4.500h10v10H.500zM3.500 4V1.500h11v10h-3.500" /></svg>
          <svg width="16" height="16"><path d="M.500 .500l15 15M15.500 .500l-15 15" stroke="#000" /></svg>
        </Controls>
      </TitleBar>
      <MenuBar>{menus.map(([m, w]) => <MenuItem key={m} $w={w}>{m}</MenuItem>)}</MenuBar>
      <ToolRow>
        {groups.map((g, gi) => (
          <ToolGroup key={gi} $w={g.w} $gap={g.gap}>
            <Grip $pad={g.pad} />
            {g.items.map((it, i) =>
              it === "|" ? <VRule key={i} /> : (
                <ToolButton key={i} $on={it.endsWith("*")}><Icon name={it.replace("*", "")} /></ToolButton>
              )
            )}
          </ToolGroup>
        ))}
      </ToolRow>
      <DesignRow>
        <Grip />
        <Combo>
          Base Design
          <svg width="13" height="8" fill="none" stroke="#555" strokeWidth="1.300"><path d="M1 1l5.500 5.500L12 1" /></svg>
        </Combo>
      </DesignRow>
      <TabRow>
        <Tab>
          <TabShape width="254" height="35">
            <defs><linearGradient id="tab" x2="0" y2="1"><stop stopColor="#e6f2fa" /><stop offset="1" stopColor="#c0dff2" /></linearGradient></defs>
            <path d="M0 27L26 .500H253.500V35H0z" fill="url(#tab)" />
            <path d="M0 27L26 .500H253.500V35" fill="none" stroke="#6fa0c0" />
          </TabShape>
          <TabIcon><Icon name="parts" size={23} /></TabIcon>
          <TabLabel>Schematic Capture</TabLabel>
          <TabIcon><svg width="15" height="15"><path d="M1 1l13 13M14 1L1 14" stroke="#666" strokeWidth="2.600" /></svg></TabIcon>
        </Tab>
      </TabRow>
      <Band />
      <Main>
        <SideBar $w={47} $h={786}>
          <HGrip />
          {side.map((it, i) =>
            it === "|" ? <HRule key={i} $m={i < 10 ? "2px 0 1.500px 2px" : "1px 0 1px 2px"} /> : (
              <SideButton key={i} $on={it.endsWith("*")}><Icon name={it.replace("*", "")} size={it === "text" ? 32 : 31} /></SideButton>
            )
          )}
        </SideBar>
        <SideBar $w={49} $h={202}>
          <HGrip />
          <SideButton><Icon name="cw" /></SideButton>
          <SideButton><Icon name="ccw" /></SideButton>
          <Angle>0°</Angle>
          <HRule $m="1px 0 1px 4px" />
          <SideButton><Icon name="flipX" /></SideButton>
          <SideButton><Icon name="flipY" /></SideButton>
        </SideBar>
        <Selector>
          <Overview><Thumb /></Overview>
          <Panel>
            <PanelHead><PBadge>P</PBadge>TERMINALS</PanelHead>
            <List>{terminals.map((t) => <Row key={t} $on={t === "POWER"}>{t}</Row>)}</List>
          </Panel>
        </Selector>
        <CanvasFrame><Canvas><Schematic /></Canvas></CanvasFrame>
      </Main>
      <StatusBar>
        <StatusGroup $w={377} $gap={5}>
          <Grip $pad={0} />
          <Play $ml={15}><Icon name="play" /></Play>
          <Play $ml={20}><Icon name="step" /></Play>
          <Play $ml={20}><Icon name="pause" /></Play>
          <Play $ml={20}><Icon name="stop" /></Play>
          <Play $ml={11}><VRule /></Play>
          <Play $ml={6}><Icon name="info" /></Play>
          <Msg $ml={8}>5 Message(s)</Msg>
        </StatusGroup>
        <StatusGroup $w={412} $gap={5}>
          <Grip $pad={0} />
          <Msg $ml={7} $c="#004000">ANIMATING: 00:03:19.750000 (CPU load 8%)</Msg>
        </StatusGroup>
        <StatusGroup $w={1121}>
          <Grip $pad={0} />
          <Msg $ml={480}>+1650.0</Msg>
          <Msg $ml={477}>+1650.0</Msg>
          <Msg $ml={26} $c="#100080">th</Msg>
        </StatusGroup>
      </StatusBar>
      <TaskBar>
        {tasks.map(([name, w, run]) => (
          <Slot key={name} $w={w} $run={run} $active={name === "proteus"}>{taskIcons[name]}</Slot>
        ))}
        <Tray>
          <TrayItem $mr={14}><svg width="19" height="11" fill="none" stroke="#fff" strokeWidth="1.500"><path d="M1 10l8.500-8.500L18 10" /></svg></TrayItem>
          <TrayItem $mr={11}>
            <svg width="25" height="18" fill="none" stroke="#fff" strokeWidth="1.200">
              <path d="M8 5.500h15v10H5M24.500 8v5" /><path d="M11 7.500h10v6H8z" fill="#fff" /><path d="M1 4h7v3q0 3-3.500 3T1 7zM2.500 0v4M6.500 0v4M4.500 10v6" />
            </svg>
          </TrayItem>
          <TrayItem $mr={13}>
            <svg width="25" height="19" fill="none" stroke="#fff" strokeWidth="1.200">
              <path d="M8 1h16v13H6M13 14v4M8 18h9" /><path d="M1 1h6v7H1zM2.500 3h3M4 3v3M4 8v10" />
            </svg>
          </TrayItem>
          <TrayItem $mr={18}>
            <svg width="22" height="18" fill="none" stroke="#fff" strokeWidth="1.200">
              <path d="M1 6h3l5-5v16l-5-5H1zM12 6q2 3 0 6M15 4q3.500 5 0 10" /><path d="M18 2q5 7 0 14" opacity=".4" />
            </svg>
          </TrayItem>
          <TrayItem $mr={22}>ENG</TrayItem>
          <Clock>8:57 AM<br />3/4/2022</Clock>
          <TrayItem $mr={29}>
            <svg width="25" height="25" fill="none" stroke="#fff" strokeWidth="1.300"><path d="M1 1h23v18h-7.500L12 23.500 8 19H1z" /></svg>
          </TrayItem>
          <ShowDesktop />
        </Tray>
      </TaskBar>
    </Window>
  );
}
